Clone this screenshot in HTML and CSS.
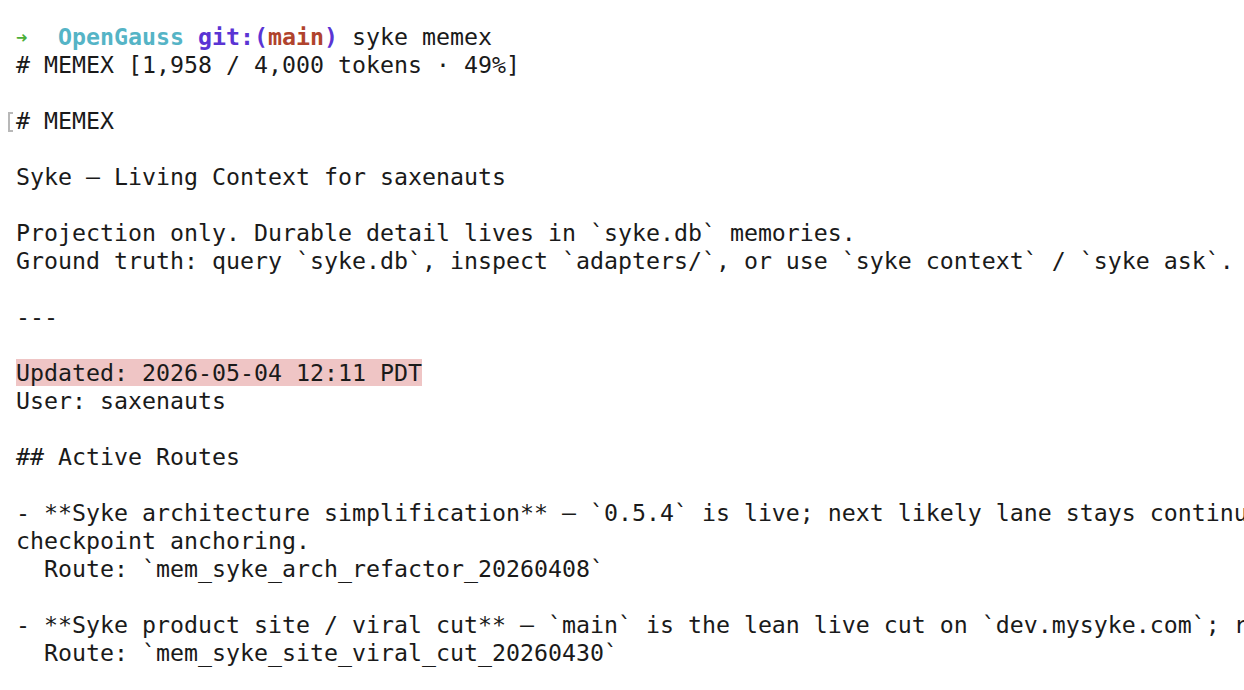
FILE: index.html
```html
<!DOCTYPE html>
<html>
<head>
<meta charset="utf-8">
<link rel="stylesheet" href="styles.css">
</head>
<body>
<div class="term">
<div class="line"><span class="arrow">➜</span>  <span class="dir">OpenGauss</span> <span class="git">git:(</span><span class="branch">main</span><span class="git">)</span> syke memex</div>
<div class="line"># MEMEX [1,958 / 4,000 tokens · 49%]</div>
<div class="line"></div>
<div class="line"><span class="mark"></span># MEMEX</div>
<div class="line"></div>
<div class="line">Syke — Living Context for saxenauts</div>
<div class="line"></div>
<div class="line">Projection only. Durable detail lives in `syke.db` memories.</div>
<div class="line">Ground truth: query `syke.db`, inspect `adapters/`, or use `syke context` / `syke ask`.</div>
<div class="line"></div>
<div class="line">---</div>
<div class="line"></div>
<div class="line"><span class="hl">Updated: 2026-05-04 12:11 PDT</span></div>
<div class="line">User: saxenauts</div>
<div class="line"></div>
<div class="line">## Active Routes</div>
<div class="line"></div>
<div class="line">- **Syke architecture simplification** — `0.5.4` is live; next likely lane stays continuity-first with</div>
<div class="line">checkpoint anchoring.</div>
<div class="line">  Route: `mem_syke_arch_refactor_20260408`</div>
<div class="line"></div>
<div class="line">- **Syke product site / viral cut** — `main` is the lean live cut on `dev.mysyke.com`; ready for promotion</div>
<div class="line">  Route: `mem_syke_site_viral_cut_20260430`</div>
<div class="line"></div>
</div>
</body>
</html>
```

FILE: styles.css
```css
html, body {
  margin: 0;
  padding: 0;
  background: #ffffff;
  overflow: hidden;
}
.term {
  padding: 23px 0 0 16px;
  font-family: "DejaVu Sans Mono", "Liberation Mono", monospace;
  font-size: 23.25px;
  letter-spacing: 0;
  color: #1a1a1a;
  width: 1600px;
}
.line {
  height: 28px;
  line-height: 28px;
  white-space: pre;
}
.arrow {
  color: #4caf3a;
  font-weight: bold;
  font-size: 19px;
  display: inline-block;
  width: 14px;
  overflow: visible;
  vertical-align: top;
}
.dir {
  color: #55b4c6;
  font-weight: bold;
}
.git {
  color: #5a34d4;
  font-weight: bold;
}
.branch {
  color: #b0432d;
  font-weight: bold;
}
.mark {
  display: inline-block;
  width: 5px;
  height: 20px;
  margin-left: -8px;
  margin-right: 3px;
  border: 2px solid #b8b8b8;
  border-right: none;
  box-sizing: border-box;
  vertical-align: -3px;
}
.hl {
  background: #efc5c5;
}
```
